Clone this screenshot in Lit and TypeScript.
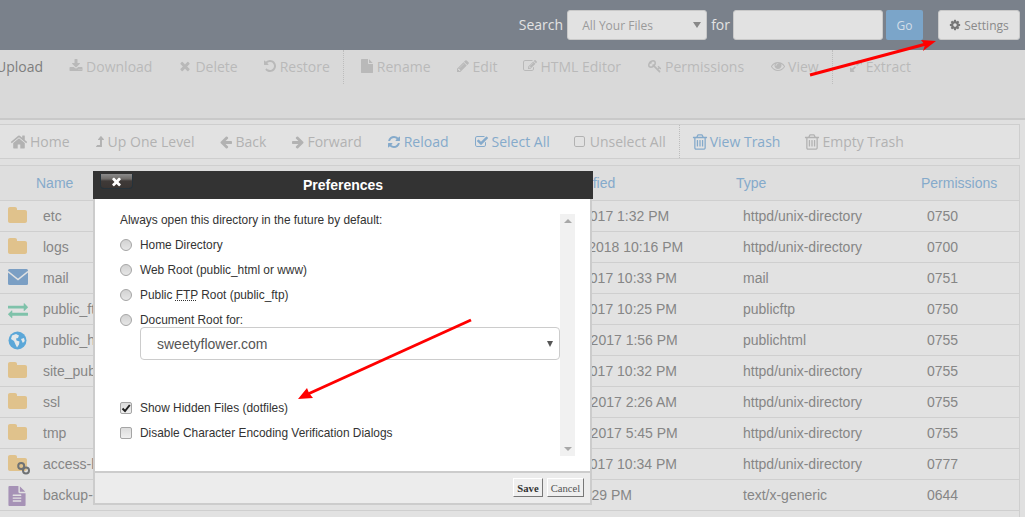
import { LitElement, html, css, svg } from "lit";
import { customElement } from "lit/decorators.js";

const P: Record<string, string> = {
  home: "M1472 992v480q0 26-19 45t-45 19h-384v-384h-256v384h-384q-26 0-45-19t-19-45v-480q0-1 .5-3t.5-3l575-474 575 474q1 2 1 6zm223-69l-62 74q-8 9-21 11h-3q-13 0-21-7l-692-577-692 577q-12 8-24 7-13-2-21-11l-62-74q-8-10-7-23.5t11-21.5l719-599q32-26 76-26t76 26l244 204v-195q0-14 9-23t23-9h192q14 0 23 9t9 23v408l219 182q10 8 11 21.5t-7 23.5z",
  cog: "M1152 896q0-106-75-181t-181-75-181 75-75 181 75 181 181 75 181-75 75-181zm512-109v222q0 12-8 23t-20 13l-185 28q-19 54-39 91 35 50 107 138 10 12 10 25t-9 23q-27 37-99 108t-94 71q-12 0-26-9l-138-108q-44 23-91 38-16 136-29 186-7 28-36 28h-222q-14 0-24.5-8.5t-11.5-21.5l-28-184q-49-16-90-37l-141 107q-10 9-25 9-14 0-25-11-126-114-165-168-7-10-7-23 0-12 8-23 15-21 51-66.5t54-70.5q-27-50-41-99l-183-27q-13-2-21-12.5t-8-23.5v-222q0-12 8-23t19-13l186-28q14-46 39-92-40-57-107-138-10-12-10-24 0-10 9-23 26-36 98.5-107.5t94.5-71.5q13 0 26 10l138 107q44-23 91-38 16-136 29-186 7-28 36-28h222q14 0 24.5 8.5t11.5 21.5l28 184q49 16 90 37l142-107q9-9 24-9 13 0 25 10 129 119 165 170 7 8 7 22 0 12-8 23-15 21-51 66.5t-54 70.5q26 50 41 98l183 28q13 2 21 12.5t8 23.5z",
  remove: "M1490 1322q0 40-28 68l-136 136q-28 28-68 28t-68-28l-294-294-294 294q-28 28-68 28t-68-28l-136-136q-28-28-28-68t28-68l294-294-294-294q-28-28-28-68t28-68l136-136q28-28 68-28t68 28l294 294 294-294q28-28 68-28t68 28l136 136q28 28 28 68t-28 68l-294 294 294 294q28 28 28 68z",
  download: "M1344 1344q0-26-19-45t-45-19-45 19-19 45 19 45 45 19 45-19 19-45zm256 0q0-26-19-45t-45-19-45 19-19 45 19 45 45 19 45-19 19-45zm128-224v320q0 40-28 68t-68 28h-1472q-40 0-68-28t-28-68v-320q0-40 28-68t68-28h465l135 136q58 56 136 56t136-56l136-136h464q40 0 68 28t28 68zm-325-569q17 41-14 70l-448 448q-18 19-45 19t-45-19l-448-448q-31-29-14-70 17-39 59-39h256v-448q0-26 19-45t45-19h256q26 0 45 19t19 45v448h256q42 0 59 39z",
  left: "M1664 896v128q0 53-32.5 90.5t-84.5 37.5h-704l293 294q38 36 38 90t-38 90l-75 76q-37 37-90 37-52 0-91-37l-651-652q-37-37-37-90 0-52 37-91l651-650q38-38 91-38 52 0 90 38l75 74q38 38 38 91t-38 91l-293 293h704q52 0 84.5 37.5t32.5 90.5z",
  right: "M1600 960q0 54-37 91l-651 651q-39 37-91 37-51 0-90-37l-75-75q-38-38-38-91t38-91l293-293h-704q-52 0-84.5-37.5t-32.5-90.5v-128q0-53 32.5-90.5t84.5-37.5h704l-293-294q-38-36-38-90t38-90l75-75q38-38 90-38 53 0 91 38l651 651q37 35 37 90z",
  refresh: "M1639 1056q0 5-1 7-64 268-268 434.5t-478 166.5q-146 0-282.5-55t-243.5-157l-129 129q-19 19-45 19t-45-19-19-45v-448q0-26 19-45t45-19h448q26 0 45 19t19 45-19 45l-137 137q71 66 161 102t187 36q134 0 250-65t186-179q11-17 53-117 8-23 30-23h192q13 0 22.5 9.5t9.5 22.5zm25-800v448q0 26-19 45t-45 19h-448q-26 0-45-19t-19-45 19-45l138-138q-148-137-349-137-134 0-250 65t-186 179q-11 17-53 117-8 23-30 23h-199q-13 0-22.5-9.5t-9.5-22.5v-7q65-268 270-434.5t480-166.5q146 0 284 55.5t245 156.5l130-129q19-19 45-19t45 19 19 45z",
  check: "M1408 930v318q0 119-84.5 203.5t-203.5 84.5h-832q-119 0-203.5-84.5t-84.5-203.5v-832q0-119 84.5-203.5t203.5-84.5h832q63 0 117 25 15 7 18 23 3 17-9 29l-49 49q-10 10-23 10-3 0-9-2-23-6-45-6h-832q-66 0-113 47t-47 113v832q0 66 47 113t113 47h832q66 0 113-47t47-113v-254q0-13 9-22l64-64q10-10 23-10 6 0 12 3 20 8 20 29zm231-489l-814 814q-24 24-57 24t-57-24l-430-430q-24-24-24-57t24-57l110-110q24-24 57-24t57 24l263 263 647-647q24-24 57-24t57 24l110 110q24 24 24 57t-24 57z",
  square: "M1120 256h-832q-66 0-113 47t-47 113v832q0 66 47 113t113 47h832q66 0 113-47t47-113v-832q0-66-47-113t-113-47zm288 160v832q0 119-84.5 203.5t-203.5 84.5h-832q-119 0-203.5-84.5t-84.5-203.5v-832q0-119 84.5-203.5t203.5-84.5h832q119 0 203.5 84.5t84.5 203.5z",
  trash: "M704 736v576q0 14-9 23t-23 9h-64q-14 0-23-9t-9-23v-576q0-14 9-23t23-9h64q14 0 23 9t9 23zm256 0v576q0 14-9 23t-23 9h-64q-14 0-23-9t-9-23v-576q0-14 9-23t23-9h64q14 0 23 9t9 23zm256 0v576q0 14-9 23t-23 9h-64q-14 0-23-9t-9-23v-576q0-14 9-23t23-9h64q14 0 23 9t9 23zm128 724v-948h-896v948q0 22 7 40.5t14.5 27 10.5 8.5h832q3 0 10.5-8.5t14.5-27 7-40.5zm-672-1076h448l-48-117q-7-9-17-11h-317q-10 2-17 11zm928 32v64q0 14-9 23t-23 9h-96v948q0 83-47 143.5t-113 60.5h-832q-66 0-113-58.5t-47-141.5v-952h-96q-14 0-23-9t-9-23v-64q0-14 9-23t23-9h309l70-167q15-37 54-63t79-26h320q40 0 79 26t54 63l70 167h309q14 0 23 9t9 23z",
  pencil: "M491 1536l91-91-235-235-91 91v107h128v128h107zm523-928q0-22-22-22-10 0-17 7l-542 542q-7 7-7 17 0 22 22 22 10 0 17-7l542-542q7-7 7-17zm-54-192l416 416-832 832h-416v-416zm683 96q0 53-37 90l-166 166-416-416 166-165q36-38 90-38 53 0 91 38l235 234q37 39 37 91z",
  edit: "M888 1184l116-116-152-152-116 116v56h96v96h56zm440-720q-16-16-33 1l-350 350q-17 17-1 33t33-1l350-350q17-17 1-33zm80 594v190q0 119-84.5 203.5t-203.5 84.5h-832q-119 0-203.5-84.5t-84.5-203.5v-832q0-119 84.5-203.5t203.5-84.5h832q63 0 117 25 15 7 18 23 3 17-9 29l-49 49q-14 14-32 8-23-6-45-6h-832q-66 0-113 47t-47 113v832q0 66 47 113t113 47h832q66 0 113-47t47-113v-126q0-13 9-22l64-64q15-15 35-7t20 29zm-96-738l288 288-672 672h-288v-288zm444 132l-92 92-288-288 92-92q28-28 68-28t68 28l152 152q28 28 28 68t-28 68z",
  key: "M832 512q0-80-56-136t-136-56-136 56-56 136q0 42 19 83-41-19-83-19-80 0-136 56t-56 136 56 136 136 56 136-56 56-136q0-42-19-83 41 19 83 19 80 0 136-56t56-136zm851 704q0 17-49 66t-66 49q-9 0-28.5-16t-36.5-33-38.5-40-24.5-26l-96 96 220 220q28 28 28 68 0 42-39 81t-81 39q-40 0-68-28l-671-671q-176 131-365 131-163 0-265.5-102.5t-102.5-265.5q0-160 95-313t248-248 313-95q163 0 265.5 102.5t102.5 265.5q0 189-131 365l355 355 96-96q-3-3-26-24.5t-40-38.5-33-36.5-16-28.5q0-17 49-66t66-49q13 0 23 10 6 6 46 44.5t82 79.5 86.5 86 73 78 28.5 41z",
  eye: "M1664 960q-152-236-381-353 61 104 61 225 0 185-131.5 316.5t-316.5 131.5-316.5-131.5-131.5-316.5q0-121 61-225-229 117-381 353 133 205 333.5 326.5t434.5 121.5 434.5-121.5 333.5-326.5zm-720-384q0-20-14-34t-34-14q-125 0-214.5 89.5t-89.5 214.5q0 20 14 34t34 14 34-14 14-34q0-86 61-147t147-61q20 0 34-14t14-34zm848 384q0 34-20 69-140 230-376.5 368.5t-499.5 138.5-499.5-139-376.5-368q-20-35-20-69t20-69q140-229 376.5-368t499.5-139 499.5 139 376.5 368q20 35 20 69z",
  file: "M1152 512v-472q22 14 36 28l408 408q14 14 28 36h-472zm-128 32q0 40 28 68t68 28h544v1056q0 40-28 68t-68 28h-1344q-40 0-68-28t-28-68v-1600q0-40 28-68t68-28h800v544z",
  filetext: "M1596 476q14 14 28 36h-472v-472q22 14 36 28zm-476 164h544v1056q0 40-28 68t-68 28h-1344q-40 0-68-28t-28-68v-1600q0-40 28-68t68-28h800v544q0 40 28 68t68 28zm160 736v-64q0-14-9-23t-23-9h-704q-14 0-23 9t-9 23v64q0 14 9 23t23 9h704q14 0 23-9t9-23zm0-256v-64q0-14-9-23t-23-9h-704q-14 0-23 9t-9 23v64q0 14 9 23t23 9h704q14 0 23-9t9-23zm0-256v-64q0-14-9-23t-23-9h-704q-14 0-23 9t-9 23v64q0 14 9 23t23 9h704q14 0 23-9t9-23z",
  undo: "M1664 896q0 156-61 298t-164 245-245 164-298 61q-172 0-327-72.5t-264-204.5q-7-10-6.5-22.5t8.5-20.5l137-138q10-9 25-9 16 2 23 12 73 95 179 147t225 52q104 0 198.5-40.5t163.5-109.5 109.5-163.5 40.5-198.5-40.5-198.5-109.5-163.5-163.5-109.5-198.5-40.5q-98 0-188 35.5t-160 101.5l137 138q31 30 14 69-17 40-59 40h-448q-26 0-45-19t-19-45v-448q0-42 40-59 39-17 69 14l130 129q107-101 244.5-156.5t284.5-55.5q156 0 298 61t245 164 164 245 61 298z",
  levelup: "M1395 603q-17 37-57 37h-192v864q0 14-9 23t-23 9h-704q-21 0-29-18-8-20 4-35l160-192q9-11 25-11h320v-640h-192q-40 0-57-37-17-36 9-68l320-384q18-22 49-22t49 22l320 384q27 32 9 68z",
  expand: "M883 1056q0 13-10 23l-332 332 144 144q19 19 19 45t-19 45-45 19h-448q-26 0-45-19t-19-45v-448q0-26 19-45t45-19 45 19l144 144 332-332q10-10 23-10t23 10l114 114q10 10 10 23zm781-864v448q0 26-19 45t-45 19-45-19l-144-144-332 332q-10 10-23 10t-23-10l-114-114q-10-10-10-23t10-23l332-332-144-144q-19-19-19-45t19-45 45-19h448q26 0 45 19t19 45z",
  exchange: "M1792 1184v192q0 13-9.5 22.5t-22.5 9.5h-1376v192q0 13-9.5 22.5t-22.5 9.5q-12 0-24-10l-319-320q-9-9-9-22 0-14 9-23l320-320q9-9 23-9 13 0 22.5 9.5t9.5 22.5v192h1376q13 0 22.5 9.5t9.5 22.5zm0-544q0 14-9 23l-320 320q-9 9-23 9-13 0-22.5-9.5t-9.5-22.5v-192h-1376q-13 0-22.5-9.5t-9.5-22.5v-192q0-13 9.5-22.5t22.5-9.5h1376v-192q0-14 9-23t23-9q12 0 24 10l319 319q9 9 9 23z",
};

const FOLDER = "M2 0h5c1.2 0 2 .8 2 2v1h8c1.2 0 2 .8 2 2v9c0 1.2-.8 2-2 2H2c-1.2 0-2-.8-2-2V2C0 .8.8 0 2 0z";

const ic = (n: string, size = 14) =>
  html`<svg class="ic" width=${size} height=${size} viewBox="0 0 1792 1792" fill="currentColor">${svg`<path d=${P[n]}></path>`}</svg>`;

type Tool = { t?: string; i?: string; w?: number; s?: number; m?: number; c?: string; div?: boolean };

const tools1: Tool[] = [
  { t: "Upload", c: "dark" },
  { i: "download", t: "Download", w: 14 },
  { i: "remove", t: "Delete", w: 14 },
  { i: "undo", t: "Restore", w: 13 },
  { div: true },
  { i: "file", t: "Rename", w: 13 },
  { i: "pencil", t: "Edit", w: 13 },
  { i: "edit", t: "HTML Editor", w: 14 },
  { i: "key", t: "Permissions", w: 15 },
  { i: "eye", t: "View", w: 15 },
  { div: true },
  { i: "expand", t: "Extract", w: 13 },
];

const tools2: Tool[] = [
  { i: "home", t: "Home", w: 17, s: 18 },
  { i: "levelup", t: "Up One Level", w: 9, m: 25 },
  { i: "left", t: "Back", w: 13, m: 25 },
  { i: "right", t: "Forward", w: 13 },
  { i: "refresh", t: "Reload", w: 13, c: "blue", m: 27 },
  { i: "check", t: "Select All", w: 13, c: "blue", m: 25 },
  { i: "square", t: "Unselect All", w: 12 },
  { div: true },
  { i: "trash", t: "View Trash", w: 14, s: 18, c: "blue", m: 25 },
  { i: "trash", t: "Empty Trash", w: 14, s: 18 },
];

const rows = [
  ["folder", "etc", "Oct 22, 2017 1:32 PM", "httpd/unix-directory", "0750", 0],
  ["folder", "logs", "April 15, 2018 10:16 PM", "httpd/unix-directory", "0700", 0],
  ["mail", "mail", "Oct 22, 2017 10:33 PM", "mail", "0751", 0],
  ["ftp", "public_ftp", "Oct 22, 2017 10:25 PM", "publicftp", "0750", 0],
  ["globe", "public_html", "June 15, 2017 1:56 PM", "publichtml", "0755", 0],
  ["folder", "site_publisher", "Oct 22, 2017 10:32 PM", "httpd/unix-directory", "0755", 0],
  ["folder", "ssl", "June 15, 2017 2:26 AM", "httpd/unix-directory", "0755", 0],
  ["folder", "tmp", "June 15, 2017 5:45 PM", "httpd/unix-directory", "0755", 0],
  ["link", "access-logs", "Oct 22, 2017 10:34 PM", "httpd/unix-directory", "0777", 0],
  ["doc", "backup-sweetyflower", "29 PM", "text/x-generic", "0644", 58.5],
] as [string, string, string, string, string, number][];

@customElement("app-root")
export class AppRoot extends LitElement {
  static styles = css`
    :host { display: block; position: relative; width: 1025px; height: 517px; overflow: hidden; background: #e0e0e0; font-family: "Liberation Sans", Arial, sans-serif; }
    .ic { display: block; flex: none; }

    .top { height: 50px; background: #7a818b; display: flex; align-items: center; justify-content: flex-end; padding-right: 5px; box-sizing: border-box; font-family: "Open Sans", sans-serif; }
    .lbl { color: #e3e3e3; font-size: 14px; margin-top: -2px; }
    .fld { height: 30px; box-sizing: border-box; background: #e2e2e2; border: 1px solid #c9c9c9; border-radius: 3px; font-size: 12px; color: #9a9a9a; display: flex; align-items: center; }
    .sel { width: 140px; margin: 0 4px; padding: 0 0 0 14px; justify-content: space-between; }
    .caret { width: 0; height: 0; border: 4px solid transparent; border-top: 6px solid #888; border-bottom: 0; margin-right: 5px; }
    .inp { width: 150px; margin-left: 3px; }
    .go { width: 37px; height: 30px; margin-left: 3px; background: #7ba5c9; border-radius: 2px; color: #d3dee8; font-size: 12px; display: flex; align-items: center; justify-content: center; }
    .set { width: 82px; margin-left: 15px; justify-content: center; gap: 3px; color: #8a8a8a; }
    .set .ic { color: #777; width: 12px; height: 12px; }

    .tb1 { height: 68px; background: #d9d9d9; border-bottom: 2px solid #c9c9c9; display: flex; align-items: flex-start; font-family: "Open Sans", sans-serif; font-size: 14px; color: #b9b9b9; white-space: nowrap; overflow: hidden; }
    .tb2 { height: 35px; margin: 4px 5px 0 0; box-sizing: border-box; background: #e2e2e2; border: 1px solid #cecece; border-left: 0; display: flex; align-items: center; font-family: "Open Sans", sans-serif; font-size: 14px; color: #b2b2b2; white-space: nowrap; }
    .tool { display: flex; align-items: center; gap: 3px; margin-right: 26px; flex: none; }
    .tb1 .tool { height: 32px; }
    .tb1 .up { margin-left: -4px; }
    .tool.dark { color: #7e7e7e; }
    .tool.blue { color: #85aacb; }
    .slot { display: flex; justify-content: center; flex: none; }
    .div { flex: none; border-left: 1px dotted #bdbdbd; }
    .tb1 .div { height: 34px; margin: 0 17px 0 -13px; }
    .tb2 .div { height: 33px; margin: 0 13px 0 -13px; }
    .tb2 .first { margin-left: 10px; }

    .tbl { margin: 6px 5px 0 0; border-top: 1px solid #cfcfcf; border-right: 1px solid #cfcfcf; font-size: 14px; }
    .hd, .row { display: grid; box-sizing: border-box; border-bottom: 1px solid #cfcfcf; align-items: center; }
    .hd { height: 35px; background: #dedede; color: #85aacb; grid-template-columns: 36px 496px 204px 185px 1fr; }
    .row { height: 31px; background: #e2e2e2; color: #868686; grid-template-columns: 43px 490px 210px 184px 1fr; white-space: nowrap; }
    .row .name { position: relative; }
    .fi { position: absolute; left: 8px; top: -9px; }
    .fi.ftp { color: #7fc2aa; }
    .fi.doc { color: #a692b6; left: 7px; }
    .fi.blank { color: #9a9a9a; top: -5px; left: 7px; }

    .arrows { position: absolute; inset: 0; pointer-events: none; z-index: 3; }

    .modal { position: absolute; left: 93px; top: 171px; width: 499px; z-index: 2; box-sizing: border-box; background: #ccc; padding: 0 2px 2px; }
    .mh { height: 28px; margin: 0 -3px 0 -2px; background: #333; color: #fff; font-weight: bold; font-size: 14px; display: flex; align-items: center; justify-content: center; position: relative; }
    .close { position: absolute; left: 7px; top: 3px; width: 33px; height: 15px; box-sizing: border-box; border: 1px solid #26323a; border-top: 0; border-radius: 0 0 4px 4px; background: linear-gradient(#8b8b8b 0, #6f6c6a 35%, #3f3a38 50%, #3a3533 100%); color: #fff; display: flex; align-items: center; justify-content: center; }
    .mb { height: 272px; background: #fff; box-sizing: border-box; padding: 9px 15px 0 25px; display: flex; color: #333; font-size: 11.9px; }
    .mc { width: 441px; }
    .intro { height: 24px; display: flex; align-items: center; }
    .opt { height: 25px; display: flex; align-items: center; gap: 8px; white-space: nowrap; }
    .radio { width: 12px; height: 12px; box-sizing: border-box; border-radius: 50%; border: 1px solid #a5a5a5; background: linear-gradient(#d2d2d2, #e6e6e6); flex: none; }
    .cb { width: 12px; height: 12px; box-sizing: border-box; border-radius: 2px; border: 1px solid #a5a5a5; background: linear-gradient(#dcdcdc, #efefef); flex: none; display: flex; align-items: center; justify-content: center; color: #222; }
    abbr { text-decoration: underline dotted; }
    .dsel { height: 33px; margin: -5px 0 35px 20px; box-sizing: border-box; border: 1px solid #ccc; border-radius: 4px; display: flex; align-items: center; justify-content: space-between; padding: 0 6px 0 16px; font-size: 14px; color: #555; }
    .dsel .caret { border-width: 6px 3px 0; border-style: solid; border-color: #555 transparent transparent; margin: 0; }
    .sb { width: 15px; height: 242px; margin-top: 6px; background: #f1f1f1; display: flex; flex-direction: column; justify-content: space-between; align-items: center; padding: 5px 0; box-sizing: border-box; }
    .tri { width: 0; height: 0; border-left: 4px solid transparent; border-right: 4px solid transparent; }
    .tri.u { border-bottom: 4px solid #a8a8a8; }
    .tri.d { border-top: 4px solid #a8a8a8; }
    .mf { height: 32px; box-sizing: border-box; border-top: 2px solid #ccc; background: #ececec; display: flex; justify-content: flex-end; align-items: flex-start; gap: 4px; padding: 5px 6px 0 0; }
    .btn { height: 19px; box-sizing: border-box; background: #efefef; border: 1px solid; border-color: #fff #777 #777 #fff; font-family: "Liberation Serif", serif; font-size: 10.67px; color: #333; display: flex; align-items: center; justify-content: center; }
    .save { width: 30px; font-weight: bold; }
    .cancel { width: 37px; color: #555; }
  `;

  private tool(t: Tool, i: number, first: string) {
    if (t.div) return html`<span class="div"></span>`;
    const cls = `tool ${t.c ?? ""} ${i === 0 ? first : ""}`;
    const mr = t.m !== undefined ? `margin-right:${t.m}px` : "";
    return html`<span class=${cls} style=${mr}>${t.i ? html`<span class="slot" style="width:${t.w}px">${ic(t.i, t.s ?? 14)}</span>` : ""}<span>${t.t}</span></span>`;
  }

  private fileIcon(k: string) {
    if (k === "folder")
      return html`<span class="fi"><svg class="ic" width="19" height="16" viewBox="0 0 19 16"><path d=${FOLDER} fill="#e0c28c"></path></svg></span>`;
    if (k === "mail")
      return html`<span class="fi"><svg class="ic" width="20" height="16" viewBox="0 0 20 16">
        <rect width="20" height="16" rx="1.5" fill="#7b9fc4"></rect>
        <path d="M0 2.5 10 10.5 20 2.5" fill="none" stroke="#e2e2e2" stroke-width="1.6"></path></svg></span>`;
    if (k === "ftp")
      return html`<span class="fi ftp">${ic("exchange", 20)}</span>`;
    if (k === "doc")
      return html`<span class="fi doc">${ic("filetext", 20)}</span>`;
    if (k === "globe")
      return html`<span class="fi"><svg class="ic" width="19" height="19" viewBox="0 0 19 19">
        <circle cx="9.5" cy="9.5" r="9" fill="#5ba7d8"></circle>
        <path d="M4 4.5 8 3l3 1.5-1 2.5-2 .5.5 2 3 1-.5 3-2 3-1.5-3L6 10 3 8z" fill="#e4e8ea"></path>
        <path d="M13 8l3-1 .8 3-2 2z" fill="#e4e8ea"></path></svg></span>`;
    if (k === "link")
      return html`<span class="fi"><svg class="ic" width="22" height="20" viewBox="0 0 22 20">
        <path d=${FOLDER} fill="#e0c28c"></path>
        <g fill="none" stroke="#6f7274" stroke-width="2"><circle cx="13.2" cy="11" r="3"></circle><circle cx="18" cy="15.5" r="3"></circle><path d="M15 13l1.5 1"></path></g></svg></span>`;
    return "";
  }

  render() {
    return html`
      <div class="top">
        <span class="lbl">Search</span>
        <div class="fld sel"><span>All Your Files</span><span class="caret"></span></div>
        <span class="lbl">for</span>
        <div class="fld inp"></div>
        <div class="go">Go</div>
        <div class="fld set">${ic("cog", 12)}<span>Settings</span></div>
      </div>
      <div class="tb1">${tools1.map((t, i) => this.tool(t, i, "up"))}</div>
      <div class="tb2">${tools2.map((t, i) => this.tool(t, i, "first"))}</div>
      <div class="tbl">
        <div class="hd"><span></span><span>Name</span><span>Last Modified</span><span>Type</span><span>Permissions</span></div>
        ${rows.map(
          (r) => html`<div class="row">
            <span class="name">${this.fileIcon(r[0])}</span>
            <span>${r[1]}</span><span style=${r[5] ? `padding-left:${r[5]}px` : ""}>${r[2]}</span><span>${r[3]}</span><span>${r[4]}</span>
          </div>`
        )}
        <div class="row"><span class="name"><span class="fi blank">${ic("filetext", 20)}</span></span></div>
      </div>

      <div class="modal">
        <div class="mh">
          <span class="close">${ic("remove", 13)}</span>
          Preferences
        </div>
        <div class="mb">
          <div class="mc">
            <div class="intro">Always open this directory in the future by default:</div>
            <div class="opt"><span class="radio"></span>Home Directory</div>
            <div class="opt"><span class="radio"></span>Web Root (public_html or www)</div>
            <div class="opt"><span class="radio"></span><span>Public <abbr title="File Transfer Protocol">FTP</abbr> Root (public_ftp)</span></div>
            <div class="opt"><span class="radio"></span>Document Root for:</div>
            <div class="dsel"><span>sweetyflower.com</span><span class="caret"></span></div>
            <div class="opt"><span class="cb"><svg width="10" height="10" viewBox="0 0 10 10"><path d="M1.5 5.5 4 8l4.8-6" fill="none" stroke="currentColor" stroke-width="2"></path></svg></span>Show Hidden Files (dotfiles)</div>
            <div class="opt"><span class="cb"></span>Disable Character Encoding Verification Dialogs</div>
          </div>
          <div class="sb"><span class="tri u"></span><span class="tri d"></span></div>
        </div>
        <div class="mf">
          <div class="btn save">Save</div>
          <div class="btn cancel">Cancel</div>
        </div>
      </div>

      <svg class="arrows" width="1025" height="517" viewBox="0 0 1025 517">
        <line x1="810" y1="75" x2="926" y2="44" stroke="#f00" stroke-width="3"></line>
        <polygon points="936,41 921,40 925,45 923,51" fill="#f00"></polygon>
        <line x1="471" y1="320" x2="308" y2="394" stroke="#f00" stroke-width="3"></line>
        <polygon points="298,399 307,388 309,393 313,398" fill="#f00"></polygon>
      </svg>
    `;
  }
}
